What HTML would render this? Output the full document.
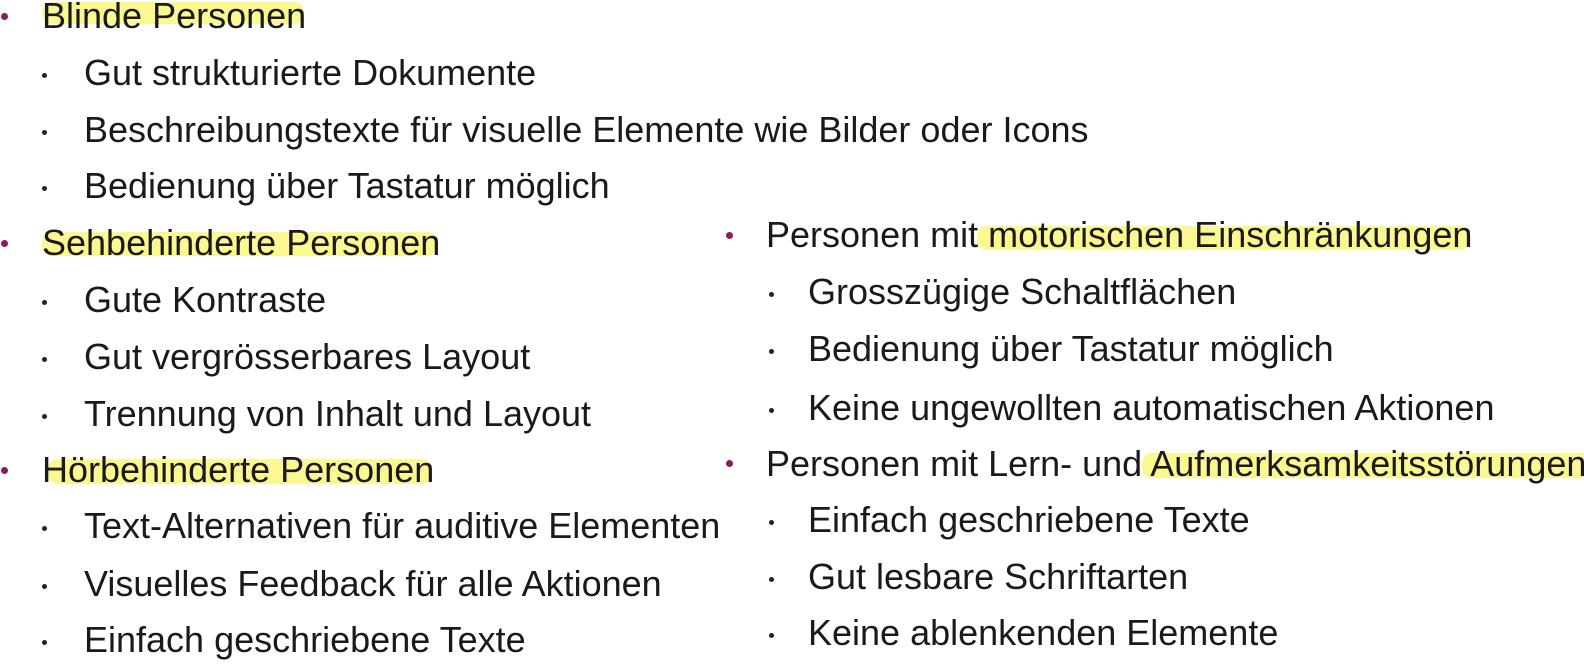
<!DOCTYPE html>
<html><head><meta charset="utf-8"><style>
body{margin:0;width:1584px;height:668px;background:#fff;position:relative;overflow:hidden;font-family:"Liberation Sans",Arial,sans-serif;color:#1a1a1a}
.t{position:absolute;font-size:36px;line-height:40px;white-space:nowrap;margin-top:-3px}
.b{position:absolute;width:7px;height:7px;border-radius:50%;background:#8a1b5c}
.s{position:absolute;width:5px;height:5px;border-radius:50%;background:#222}
.h{position:absolute;background:#fbf685;border-radius:10px;opacity:.9}
.r{position:absolute;left:7px;top:0;width:1584px;height:668px}
</style></head><body>
<div class="h" style="left:42px;top:2px;width:262px;height:22px"></div>
<div class="h" style="left:42px;top:232px;width:395px;height:24px"></div>
<div class="h" style="left:48px;top:459px;width:384px;height:25px"></div>

<div class="b" style="left:1px;top:13px"></div><div class="t" style="left:42px;top:-1px">Blinde Personen</div>
<div class="s" style="left:42px;top:73px"></div><div class="t" style="left:84px;top:56px">Gut strukturierte Dokumente</div>
<div class="s" style="left:42px;top:130px"></div><div class="t" style="left:84px;top:113px">Beschreibungstexte für visuelle Elemente wie Bilder oder Icons</div>
<div class="s" style="left:42px;top:186px"></div><div class="t" style="left:84px;top:169px">Bedienung über Tastatur möglich</div>
<div class="b" style="left:1px;top:240px"></div><div class="t" style="left:42px;top:226px">Sehbehinderte Personen</div>
<div class="s" style="left:42px;top:300px"></div><div class="t" style="left:84px;top:283px">Gute Kontraste</div>
<div class="s" style="left:42px;top:357px"></div><div class="t" style="left:84px;top:340px">Gut vergrösserbares Layout</div>
<div class="s" style="left:42px;top:414px"></div><div class="t" style="left:84px;top:397px">Trennung von Inhalt und Layout</div>
<div class="b" style="left:1px;top:467px"></div><div class="t" style="left:42px;top:453px">Hörbehinderte Personen</div>
<div class="s" style="left:42px;top:526px"></div><div class="t" style="left:84px;top:509px">Text-Alternativen für auditive Elementen</div>
<div class="s" style="left:42px;top:584px"></div><div class="t" style="left:84px;top:567px">Visuelles Feedback für alle Aktionen</div>
<div class="s" style="left:42px;top:640px"></div><div class="t" style="left:84px;top:623px">Einfach geschriebene Texte</div>

<div class="r">
<div class="h" style="left:970px;top:226px;width:492px;height:24px"></div>
<div class="h" style="left:1135px;top:453px;width:450px;height:25px"></div>
<div class="b" style="left:719px;top:232px"></div><div class="t" style="left:759px;top:218px">Personen mit motorischen Einschränkungen</div>
<div class="s" style="left:762px;top:292px"></div><div class="t" style="left:801px;top:275px">Grosszügige Schaltflächen</div>
<div class="s" style="left:762px;top:349px"></div><div class="t" style="left:801px;top:332px">Bedienung über Tastatur möglich</div>
<div class="s" style="left:762px;top:408px"></div><div class="t" style="left:801px;top:391px">Keine ungewollten automatischen Aktionen</div>
<div class="b" style="left:719px;top:460px"></div><div class="t" style="left:759px;top:447px">Personen mit Lern- und Aufmerksamkeitsstörungen</div>
<div class="s" style="left:762px;top:520px"></div><div class="t" style="left:801px;top:503px">Einfach geschriebene Texte</div>
<div class="s" style="left:762px;top:577px"></div><div class="t" style="left:801px;top:560px">Gut lesbare Schriftarten</div>
<div class="s" style="left:762px;top:633px"></div><div class="t" style="left:801px;top:616px">Keine ablenkenden Elemente</div>
</div>
</body></html>
